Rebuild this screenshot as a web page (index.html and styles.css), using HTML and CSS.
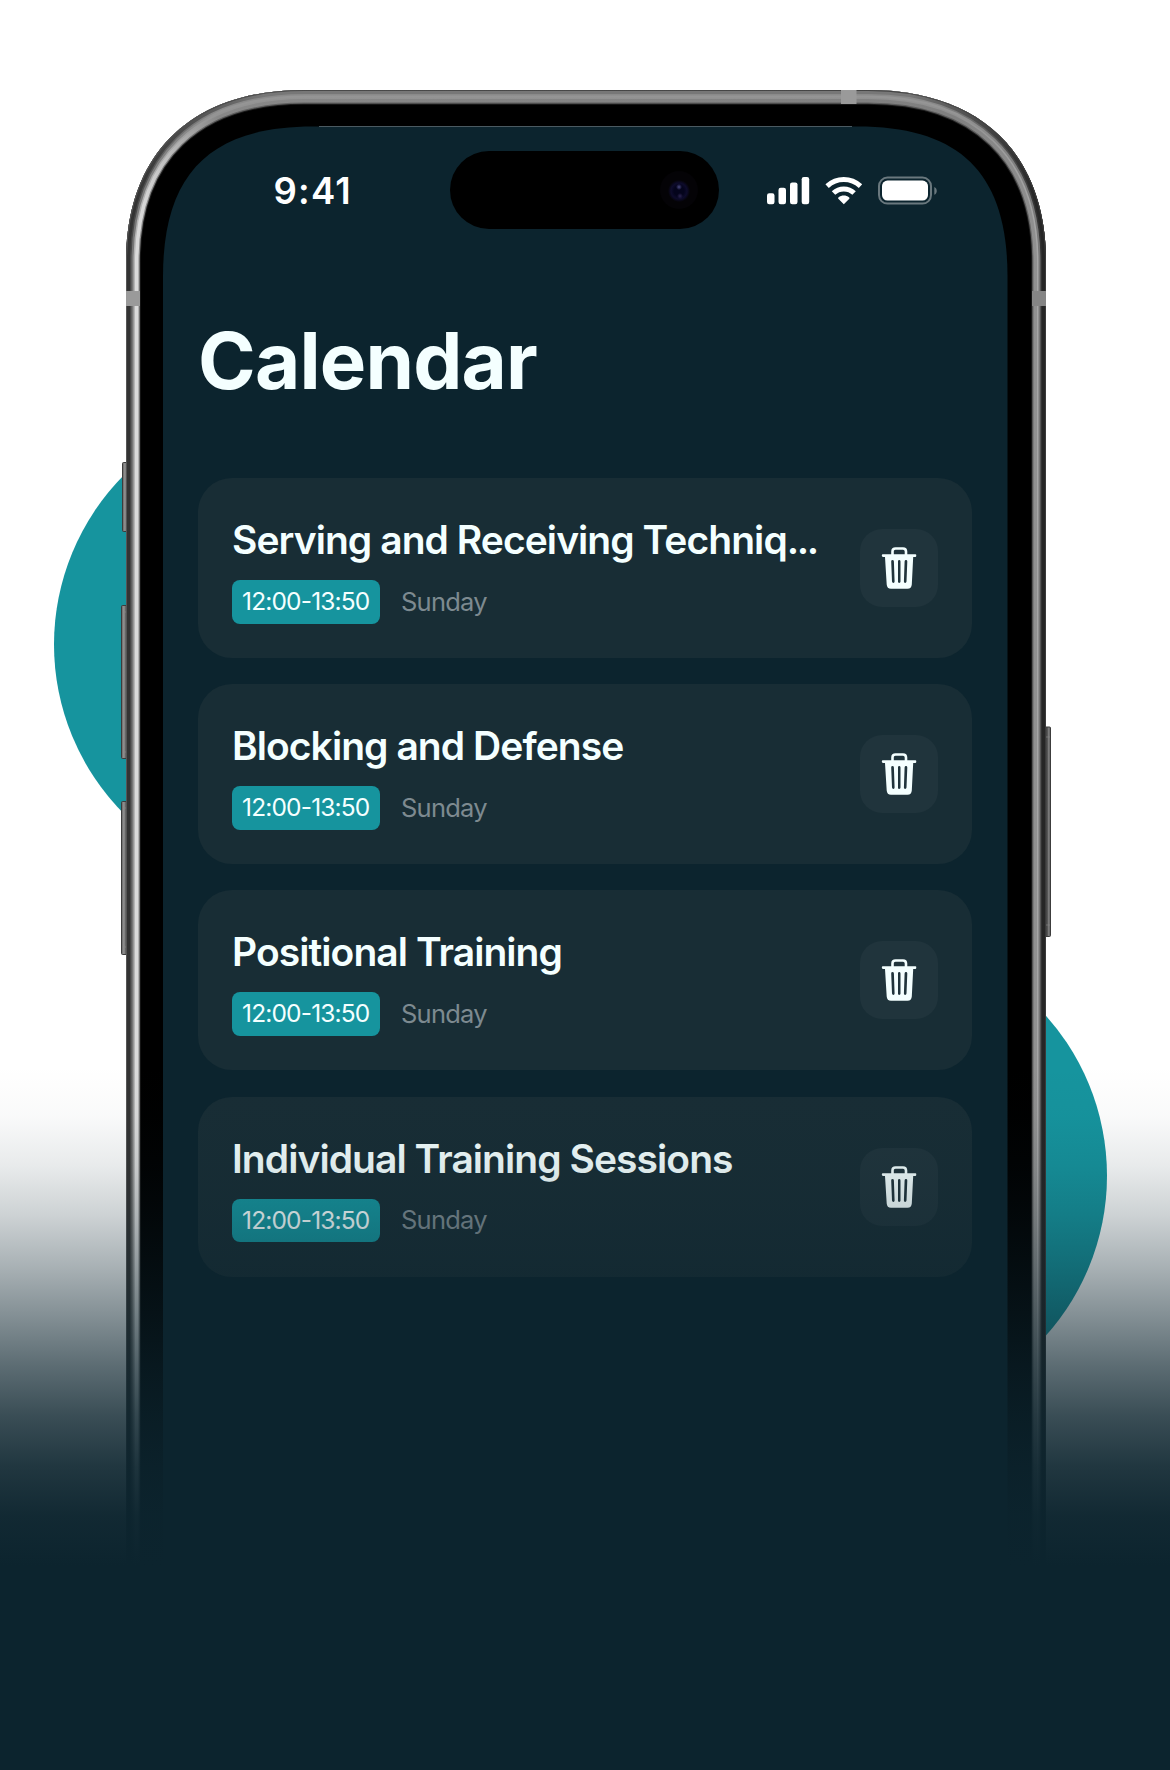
FILE: index.html
```html
<!DOCTYPE html>
<html lang="en">
<head>
<meta charset="utf-8">
<title>Calendar</title>
<link rel="stylesheet" href="styles.css">
</head>
<body>
<main class="stage">
  <svg class="device" viewBox="0 0 1170 1770" aria-hidden="true">
    <defs>
      <path id="body" d="M126 1800V262C126 153 192 90 304 90H868C980 90 1046 153 1046 262V1800Z"/>
      <clipPath id="bodyClip"><use href="#body"/></clipPath>
      <linearGradient id="m0" gradientUnits="userSpaceOnUse" x1="126" x2="1046" y1="0" y2="0"><stop offset="0" stop-color="#555"/><stop offset=".1" stop-color="#4a4a4a"/><stop offset=".9" stop-color="#444"/><stop offset="1" stop-color="#3a3a3a"/></linearGradient>
      <linearGradient id="m1" gradientUnits="userSpaceOnUse" x1="126" x2="1046" y1="0" y2="0"><stop offset=".01" stop-color="#333"/><stop offset=".15" stop-color="#777"/><stop offset=".85" stop-color="#777"/><stop offset=".99" stop-color="#262626"/></linearGradient>
      <linearGradient id="m2" gradientUnits="userSpaceOnUse" x1="126" x2="1046" y1="0" y2="0"><stop offset=".01" stop-color="#484848"/><stop offset=".1" stop-color="#8a8a8a"/><stop offset=".88" stop-color="#8a8a8a"/><stop offset=".99" stop-color="#333"/></linearGradient>
      <linearGradient id="m3" gradientUnits="userSpaceOnUse" x1="126" x2="1046" y1="0" y2="0"><stop offset=".01" stop-color="#777"/><stop offset=".1" stop-color="#959595"/><stop offset=".9" stop-color="#959595"/><stop offset=".99" stop-color="#777"/></linearGradient>
      <linearGradient id="m4" gradientUnits="userSpaceOnUse" x1="126" x2="1046" y1="0" y2="0"><stop offset=".01" stop-color="#b5b5b5"/><stop offset=".1" stop-color="#939393"/><stop offset=".9" stop-color="#909090"/><stop offset=".99" stop-color="#a5a5a5"/></linearGradient>
      <linearGradient id="m5" gradientUnits="userSpaceOnUse" x1="126" x2="1046" y1="0" y2="0"><stop offset=".015" stop-color="#dadada"/><stop offset=".1" stop-color="#888"/><stop offset=".9" stop-color="#808080"/><stop offset=".99" stop-color="#909090"/></linearGradient>
      <linearGradient id="m6" gradientUnits="userSpaceOnUse" x1="126" x2="1046" y1="0" y2="0"><stop offset=".015" stop-color="#8c8c8c"/><stop offset=".1" stop-color="#606060"/><stop offset=".9" stop-color="#5c5c5c"/><stop offset=".99" stop-color="#666"/></linearGradient>
      <linearGradient id="key" x1="0" x2="1" y1="0" y2="0"><stop offset="0" stop-color="#606060"/><stop offset=".3" stop-color="#959595"/><stop offset=".5" stop-color="#666"/><stop offset="1" stop-color="#4a4a4a"/></linearGradient>
      <linearGradient id="keyR" x1="1" x2="0" y1="0" y2="0"><stop offset="0" stop-color="#4a4a4a"/><stop offset=".2" stop-color="#858585"/><stop offset=".4" stop-color="#484848"/><stop offset="1" stop-color="#444"/></linearGradient>
    </defs>
    <circle cx="294" cy="644.500" r="240" fill="#16949e"/>
    <circle cx="867" cy="1175.700" r="240" fill="#16949e"/>
    <g stroke="#3c3c3c" stroke-width="1">
      <rect x="122.500" y="462.500" width="8" height="69" rx="1" fill="url(#key)"/>
      <rect x="121.500" y="605.500" width="8" height="153" rx="1" fill="url(#key)"/>
      <rect x="121.500" y="801.500" width="8" height="153" rx="1" fill="url(#key)"/>
      <rect x="1042" y="727" width="8.500" height="209.500" rx="1" fill="url(#keyR)"/>
    </g>
    <path stroke="#8a8a8a" d="M124.500 523.500V526M123.500 612H126M123.500 752H126M123.500 808H126M123.500 947H126M1046 737H1050M1046 925H1050" opacity=".6"/>
    <g clip-path="url(#bodyClip)" fill="none">
      <use href="#body" fill="#000"/>
      <use href="#body" stroke="#1c1c1c" stroke-width="29.500"/>
      <use href="#body" stroke="url(#m6)" stroke-width="27.500"/>
      <use href="#body" stroke="url(#m5)" stroke-width="25"/>
      <use href="#body" stroke="url(#m4)" stroke-width="18"/>
      <use href="#body" stroke="url(#m3)" stroke-width="15"/>
      <use href="#body" stroke="url(#m2)" stroke-width="11"/>
      <use href="#body" stroke="url(#m1)" stroke-width="8"/>
      <use href="#body" stroke="url(#m0)" stroke-width="2"/>
      <path fill="#9a9a9a" d="M841 90h15.500v14H841zM126 291h14v15h-14z"/>
      <path fill="#858585" d="M1032 291h14v15h-14z"/>
    </g>
    <path fill="#0c242e" d="M163 1800V276.500C163 173.500 210 126.500 313 126.500H857.500C960.500 126.500 1007.500 173.500 1007.500 276.500V1800Z"/>
    <path stroke="#4b5a61" d="M319 126.500H852"/>
  </svg>

  <section class="screen">
    <header class="status">
      <span class="clock">9:41</span>
      <span class="island"><i class="lens"></i></span>
      <svg class="indicators" viewBox="0 0 172 30" aria-hidden="true">
        <g fill="#fff">
          <rect x="0" y="18.300" width="7.500" height="11" rx="2.200"/>
          <rect x="11.500" y="12.800" width="7.500" height="16.500" rx="2.200"/>
          <rect x="23" y="7.400" width="7.500" height="21.900" rx="2.200"/>
          <rect x="34.700" y="2.100" width="7.500" height="27.200" rx="2.200"/>
          <path d="M76.800 29.200L71.300 23.700C70.900 23.200 71 22.800 71.400 22.500 74.700 19.900 78.900 19.900 82.200 22.500 82.600 22.800 82.700 23.200 82.300 23.700Z"/>
        </g>
        <g fill="none" stroke="#fff" stroke-width="5">
          <path d="M60.100 11.200C69.800 2.400 83.800 2.400 93.500 11.200"/>
          <path d="M66.500 18C72.300 12.500 81.300 12.500 87.100 18"/>
        </g>
        <rect x="112" y="2.600" width="52" height="26" rx="8.500" fill="none" stroke="#6a787e" stroke-width="2"/>
        <rect x="115" y="5.600" width="46" height="20" rx="5.500" fill="#fff"/>
        <path d="M167.300 11.900C170.600 13.200 170.600 18.400 167.300 19.700Z" fill="#6a787e"/>
      </svg>
    </header>

    <h1 class="title">Calendar</h1>

    <ul class="sessions">
      <li class="card">
        <div class="info">
          <h2 class="name">Serving and Receiving Techniq<span class="dots">...</span></h2>
          <p class="meta"><span class="time">12:00-13:50</span><span class="day">Sunday</span></p>
        </div>
        <button class="delete" aria-label="Delete"><svg viewBox="0 0 36 42"><use href="#trash"/></svg></button>
      </li>
      <li class="card">
        <div class="info">
          <h2 class="name">Blocking and Defense</h2>
          <p class="meta"><span class="time">12:00-13:50</span><span class="day">Sunday</span></p>
        </div>
        <button class="delete" aria-label="Delete"><svg viewBox="0 0 36 42"><use href="#trash"/></svg></button>
      </li>
      <li class="card">
        <div class="info">
          <h2 class="name">Positional Training</h2>
          <p class="meta"><span class="time">12:00-13:50</span><span class="day">Sunday</span></p>
        </div>
        <button class="delete" aria-label="Delete"><svg viewBox="0 0 36 42"><use href="#trash"/></svg></button>
      </li>
      <li class="card">
        <div class="info">
          <h2 class="name">Individual Training Sessions</h2>
          <p class="meta"><span class="time">12:00-13:50</span><span class="day">Sunday</span></p>
        </div>
        <button class="delete" aria-label="Delete"><svg viewBox="0 0 36 42"><use href="#trash"/></svg></button>
      </li>
    </ul>
  </section>
  <div class="fade"></div>
</main>
<svg class="symbols" width="0" height="0" aria-hidden="true">
  <symbol id="trash" viewBox="0 0 36 42">
    <path d="M11.500 8.500V4.500Q11.500 1.500 14.500 1.500H22Q25 1.500 25 4.500V8.500" fill="none" stroke="#f4ffff" stroke-width="2.600"/>
    <path fill="#f4ffff" fill-rule="evenodd" d="M2 7.300H34.500Q35.300 7.300 35.300 8.500T34.500 10H32.200L30.800 37.500Q30.500 41.700 26.500 41.700H10Q6 41.700 5.700 37.500L4 10H2Q.8 10 .8 8.600T2 7.300ZM10.200 14.500Q10.200 13.100 11.500 13.100T12.900 14.500L13.600 34.600Q13.600 36 12.400 36T11 34.600ZM17 14.500Q17 13.100 18.200 13.100T19.500 14.500V34.600Q19.500 36 18.200 36T17 34.600ZM23.600 14.500Q23.700 13.100 25 13.100T26.300 14.500L25.500 34.600Q25.300 36 24.100 36T22.900 34.600Z"/>
  </symbol>
</svg>
</body>
</html>
```
FILE: styles.css
```css
* { box-sizing: border-box; margin: 0; padding: 0; }

body {
  background: #fff;
  font-family: Inter, "Liberation Sans", sans-serif;
  color: #f4ffff;
}

.symbols { position: absolute; }

.stage {
  position: relative;
  width: 1170px;
  height: 1770px;
  overflow: hidden;
}

.device { position: absolute; inset: 0; width: 1170px; height: 1770px; }

.screen {
  position: relative;
  width: 845px;
  margin-left: 163px;
  padding-top: 151px;
}

.status {
  display: grid;
  grid-template-columns: 286.500px 269.500px 1fr;
  align-items: center;
  height: 78px;
}

.clock {
  padding: 1px 0 0 110.500px;
  font-size: 36.500px;
  font-weight: 600;
  line-height: 40px;
  letter-spacing: 1.200px;
  color: #fff;
}

.island {
  display: flex;
  align-items: center;
  justify-content: flex-end;
  height: 78px;
  padding-right: 21px;
  border-radius: 39px;
  background: #000;
}

.lens {
  width: 38px;
  height: 38px;
  border-radius: 50%;
  background:
    radial-gradient(circle at 19px 16px, #4a4a80 0, transparent 3px),
    radial-gradient(circle at 20px 25px, #2c2450 0, transparent 3px),
    radial-gradient(circle at 19px 20px, #04041c 0 5px, #0d0b2b 8px, #040306 11px);
}

.indicators { width: 172px; height: 30px; margin-left: 47.500px; }

.title {
  margin-top: 85px;
  padding-left: 35px;
  font-size: 78px;
  font-weight: 700;
  line-height: 94px;
  letter-spacing: -0.800px;
}

.sessions {
  display: grid;
  gap: 26.200px;
  margin: 70px 36px 0 35px;
  list-style: none;
}

.card {
  display: flex;
  align-items: flex-start;
  justify-content: space-between;
  height: 180px;
  padding: 39px 34px 0;
  border-radius: 34px;
  background: #182d35;
}

.name {
  font-size: 39px;
  font-weight: 600;
  line-height: 46px;
  letter-spacing: -0.940px;
  white-space: nowrap;
}

.dots { letter-spacing: -2.400px; }

.meta { display: flex; align-items: center; gap: 21.500px; margin-top: 17px; }

.time {
  width: 147.500px;
  height: 43.500px;
  border-radius: 8px;
  background: #16949e;
  font-size: 24.500px;
  font-weight: 400;
  line-height: 43.500px;
  letter-spacing: -0.850px;
  text-align: center;
}

.day {
  font-size: 25.500px;
  font-weight: 400;
  line-height: 42px;
  letter-spacing: -0.750px;
  color: #7d8a90;
}

.delete {
  display: grid;
  place-items: center;
  width: 78px;
  height: 78px;
  margin-top: 12px;
  border: 0;
  border-radius: 22px;
  background: #20343c;
}

.delete svg { width: 36px; height: 42px; }

.fade {
  position: absolute;
  inset: 1066px 0 0;
  background: linear-gradient(
    rgb(12 36 46 / 0) 0,
    rgb(12 36 46 / .022) 50px,
    rgb(12 36 46 / .094) 100px,
    rgb(12 36 46 / .206) 150px,
    rgb(12 36 46 / .352) 200px,
    rgb(12 36 46 / .51) 250px,
    rgb(12 36 46 / .67) 300px,
    rgb(12 36 46 / .81) 350px,
    rgb(12 36 46 / .915) 400px,
    rgb(12 36 46 / .978) 450px,
    rgb(12 36 46) 500px);
}
```
